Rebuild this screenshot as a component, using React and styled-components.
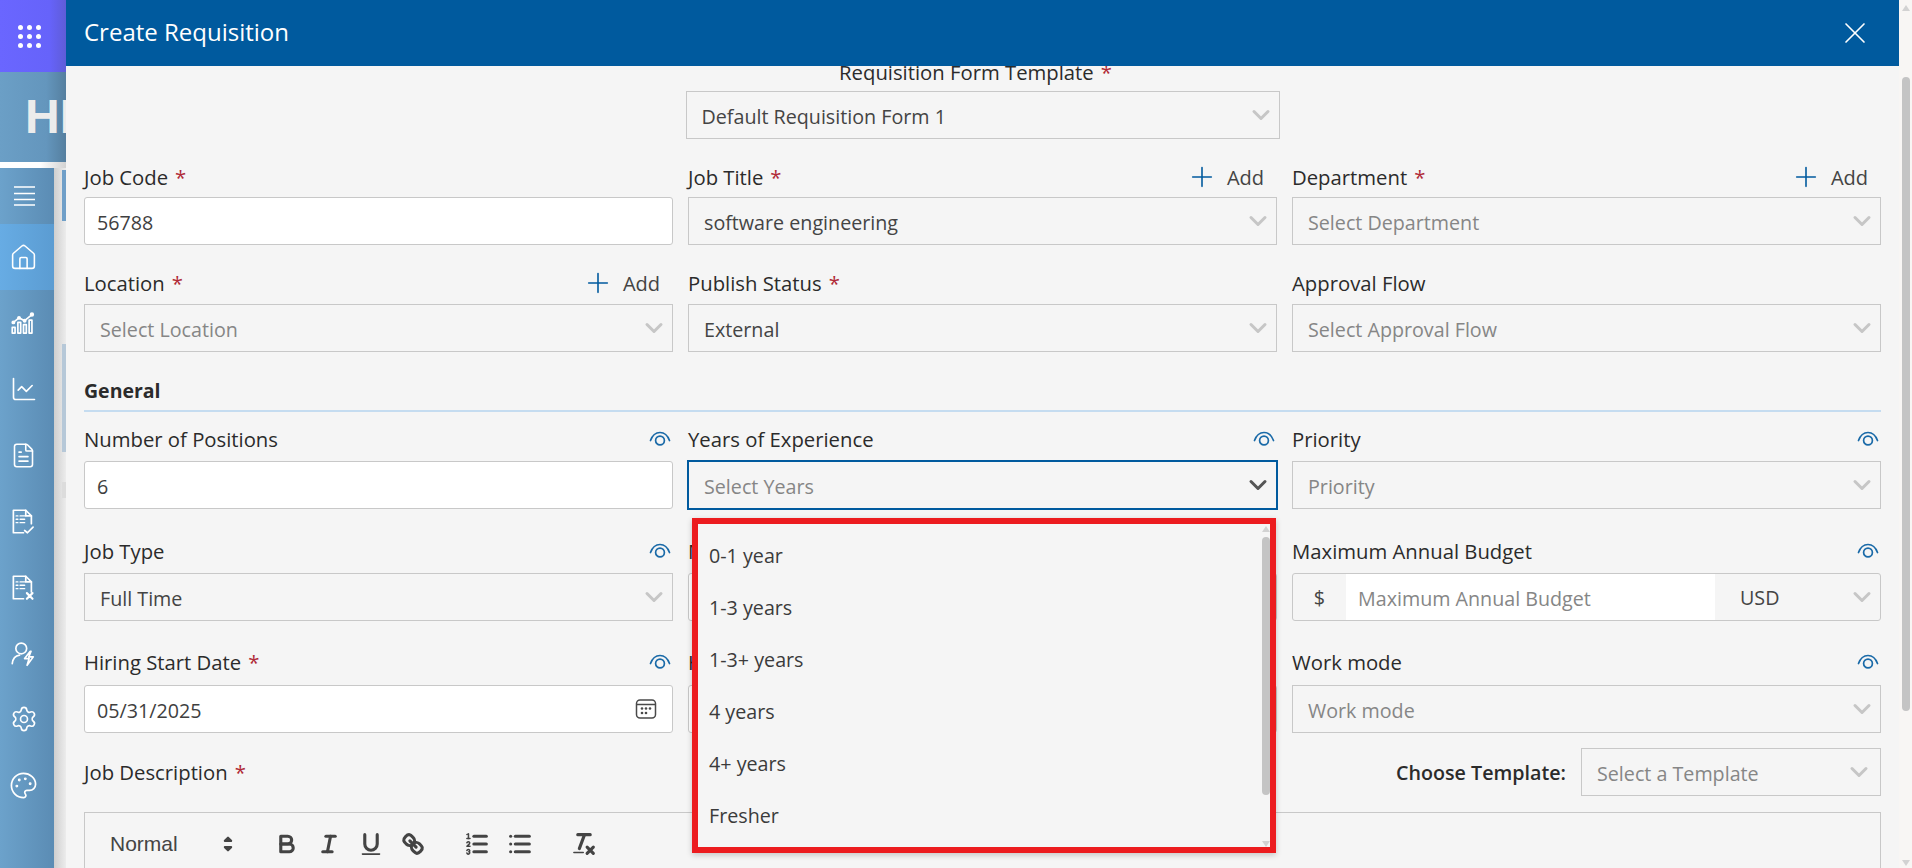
import React from "react";
import styled, { createGlobalStyle } from "styled-components";
import { House, ChartLine, FileText, Settings, Palette, X, Plus, ChevronDown } from "lucide-react";

const Global = createGlobalStyle`
  html, body { margin: 0; padding: 0; overflow: hidden; background: #f5f5f5; }
  * { box-sizing: border-box; }
  body { font-family: "Open Sans", "Noto Sans", sans-serif; }
`;

const Page = styled.div`
  width: 1912px; height: 868px; display: flex; overflow: hidden;
`;
const Rail = styled.div`
  width: 66px; flex: none; display: flex; flex-direction: column; overflow: hidden;
`;
const Launcher = styled.div`
  height: 72px; flex: none; display: flex; align-items: center; justify-content: center; padding-right: 7px;
  background: linear-gradient(90deg, #6a66ff 0%, #6663fa 75%, #5f5cd8 100%);
`;
const DotGrid = styled.div`
  display: grid; grid-template-columns: repeat(3, 5px); gap: 4px;
  span { width: 5px; height: 5px; border-radius: 50%; background: #fff; }
`;
const Brand = styled.div`
  height: 90px; flex: none; padding: 20px 0 0 25px; overflow: hidden; white-space: nowrap;
  background: linear-gradient(90deg, #6b9fc6 0%, #6496bd 70%, #557f9f 100%);
  font-family: "Liberation Sans", sans-serif; font-weight: 700; font-size: 48px; line-height: 50px; color: #ececec;
`;
const RailRule = styled.div`
  height: 6px; flex: none; background: linear-gradient(90deg, #fff 0%, #fff 60%, #d2d2d2 100%);
`;
const RailBody = styled.div`
  flex: 1; display: flex; min-height: 0;
`;
const Sidebar = styled.nav`
  width: 54px; flex: none; display: flex; flex-direction: column;
  background: linear-gradient(90deg, #6ca2cb 0%, #5b8cb4 100%);
`;
const NavItem = styled.div`
  height: ${p => p.$h || 66}px; flex: none; display: flex; align-items: center; justify-content: center;
  color: #fff; padding-right: 7px;
  background: ${p => p.$active ? "linear-gradient(90deg, #67ace4 0%, #5b9cd2 100%)" : "transparent"};
`;
const Gutter = styled.div`
  flex: 1; display: flex; flex-direction: column; align-items: flex-end; padding-top: 2px;
  background: linear-gradient(90deg, #cfcfcf 0%, #ececec 100%);
`;
const GutterTab = styled.div`
  width: 4px; flex: none; height: ${p => p.$h}px; margin-bottom: ${p => p.$mb || 0}px; background: ${p => p.$c};
`;
const Panel = styled.main`
  flex: 1; min-width: 0; display: flex; background: #f5f5f5;
`;
const Column = styled.div`
  flex: 1; min-width: 0; display: flex; flex-direction: column;
`;
const Header = styled.header`
  height: 66px; flex: none; background: #005a9e; color: #fff; display: flex; align-items: center; justify-content: space-between;
  padding: 0 26px 0 18px; position: relative; z-index: 2;
`;
const Title = styled.h1`
  margin: 0; font-size: 24px; font-weight: 400; line-height: 28px; padding-bottom: 3px;
`;
const Form = styled.form`
  flex: 1; min-height: 0; overflow: hidden; padding: 0 18px; position: relative;
`;
const TemplateBlock = styled.div`
  width: 594px; margin: -6px auto 0 auto;
`;
const TemplateLabel = styled.div`
  height: 24px; line-height: 24px; margin-bottom: 7px; padding-right: 14px; text-align: center; font-size: 20.3px; font-weight: 500; color: #2b2b2b; white-space: nowrap;
`;
const Row = styled.div`
  display: grid; grid-template-columns: repeat(3, 589px); column-gap: 15px; margin-top: ${p => p.$mt}px;
`;
const Field = styled.div`
  min-width: 0;
`;
const LabelRow = styled.div`
  height: 24px; display: flex; align-items: center; justify-content: space-between; margin-bottom: ${p => p.$gap}px;
`;
const Label = styled.label`
  font-size: 20.3px; font-weight: 500; line-height: 24px; color: #2b2b2b; white-space: nowrap;
`;
const Star = styled.span`
  color: #b02a37; margin-left: 7px;
`;
const Box = styled.div`
  height: 48px; display: flex; align-items: center; border: 1px solid #c8c8c8; background: ${p => p.$white ? "#fff" : "transparent"};
  border-radius: ${p => p.$white ? 3 : 0}px; padding: 3px 12px 0; font-size: 19.7px; color: #3f3f3f; white-space: nowrap;
  svg { margin-top: -3px; }
`;
const SelectBox = styled(Box)`
  justify-content: space-between; padding: 3px 4px 0 15px;
  color: ${p => p.$placeholder ? "#868686" : "#444"};
  ${p => p.$focus && `border-color: #005a9e; box-shadow: 0 0 0 1px #005a9e;`}
`;
const Chevron = styled(ChevronDown)`
  color: ${p => p.$dark ? "#555" : "#c6c6c6"}; flex: none; width: 28px; height: 28px;
`;
const AddLink = styled.span`
  display: flex; align-items: center; gap: 9px; padding-right: 13px; font-size: 20px; color: #444;
  svg { color: #005a9e; flex: none; }
`;
const SectionTitle = styled.div`
  margin-top: 26px; height: 34px; padding-top: 1px; line-height: 24px; border-bottom: 2px solid #c5dcf0;
  font-size: 19.5px; font-weight: 700; color: #2b2b2b;
`;
const EyeIcon = styled.svg`
  width: 22px; height: 18px; margin-right: 2px; fill: none; stroke: #1a6aa8; stroke-width: 1.7; flex: none;
`;
const Eye = () => (
  <EyeIcon viewBox="0 0 22 18">
    <path d="M1.5 10.5 C3.5 5 7 2.5 11 2.5 S18.5 5 20.5 10.5" strokeLinecap="round" />
    <circle cx="11" cy="10.5" r="4.4" />
  </EyeIcon>
);
const BudgetBox = styled.div`
  height: 48px; display: flex; border: 1px solid #c8c8c8; border-radius: 3px; font-size: 19.7px;
`;
const Prefix = styled.div`
  width: 53px; flex: none; display: flex; align-items: center; justify-content: center; color: #444;
`;
const BudgetInput = styled.div`
  flex: 1; background: #fff; color: #868686; display: flex; align-items: center; padding: 3px 0 0 12px;
`;
const Currency = styled.div`
  width: 165px; flex: none; display: flex; align-items: center; justify-content: space-between; padding: 0 4px 0 25px; color: #444;
`;
const DateBox = styled(Box)`
  justify-content: space-between; padding: 3px 14px 0 12px;
`;
const DescRow = styled.div`
  margin-top: 15px; display: flex; align-items: center; justify-content: space-between;
`;
const TemplateChooser = styled.div`
  display: flex; align-items: center; gap: 15px;
`;
const ChooserLabel = styled.span`
  font-size: 19.7px; font-weight: 600; color: #2b2b2b;
`;
const ChooserBox = styled(SelectBox)`
  width: 300px; padding-right: 7px;
`;
const Editor = styled.div`
  margin-top: 16px; height: 120px; border: 1px solid #c8c8c8; padding: 17px 0 0 25px; display: flex; align-items: flex-start;
`;
const Toolbar = styled.div`
  display: flex; align-items: center; height: 28px;
`;
const Picker = styled.div`
  width: 132px; flex: none; display: flex; align-items: center; justify-content: space-between;
  font-family: "Liberation Sans", Arial, sans-serif; font-size: 21px; color: #444;
  span { margin-top: -1px; }
`;
const Tool = styled.svg`
  width: 28px; height: 28px; flex: none; margin-left: ${p => p.$ml || 14}px; fill: none; stroke: #444; stroke-width: 2; stroke-linecap: round; stroke-linejoin: round;
  .f { fill: #444; stroke: none; }
  .t { stroke-width: 1; }
`;
const PickerIcon = styled(Tool)`
  margin-left: 0;
  polygon { fill: #444; stroke: #444; stroke-width: 1.4; }
`;
const Dropdown = styled.div`
  position: absolute; z-index: 3; left: 626px; top: 452px; width: 584px; height: 335px;
  border-width: 6px; border-style: solid; border-color: #ec1c1f; background: #f5f5f5;
  box-shadow: 0 2px 6px rgba(0,0,0,.2); display: flex;
`;
const Options = styled.ul`
  list-style: none; margin: 0; padding: 6px 0 0 11px; flex: 1; min-width: 0;
`;
const Option = styled.li`
  height: 52px; line-height: 52px; font-size: 19.7px; color: #3b3b3b;
`;
const MenuScroll = styled.div`
  width: 8px; flex: none; display: flex; flex-direction: column; align-items: center; padding-top: 2px;
`;
const UpArrow = styled.div`
  width: 0; height: 0; border-left: 4px solid transparent; border-right: 4px solid transparent; border-bottom: 6px solid #d2d2d2; flex: none;
`;
const DownArrow = styled(UpArrow)`
  border-bottom: 0; border-top: 6px solid #d2d2d2; margin-top: auto;
`;
const Thumb = styled.div`
  width: 8px; height: ${p => p.$h}px; margin-top: ${p => p.$mt}px; background: #c4c4c4; border-radius: 4px; flex: none;
`;
const PageScroll = styled.div`
  width: 13px; flex: none; background: #f8f6f4; display: flex; flex-direction: column; align-items: center; padding: 5px 0 2px 0;
`;

const Hamburger = () => (
  <svg width="24" height="24" viewBox="0 0 24 24" stroke="#fff" strokeWidth="1.4">
    <path d="M2 4h21M2 10.5h21M2 16.5h21M2 22h21" transform="translate(0 -1)" />
  </svg>
);
const Ico = p => <svg width="27" height="27" viewBox="0 0 24 24" fill="none" stroke="#fff" strokeWidth="1.5" strokeLinecap="round" strokeLinejoin="round" {...p} />;
const BarsLine = () => (
  <Ico>
    <path d="M2 20.5v-5h2.5v5zM7 20.5V11h2.5v9.5zM12 20.5v-7.5h2.5v7.5zM17 20.5V9h2.5v11.5z" />
    <path d="M3 11l5-4 5 2.5 6-5" />
    <circle cx="3" cy="11" r="1" fill="#fff" /><circle cx="8" cy="7" r="1" fill="#fff" /><circle cx="13" cy="9.5" r="1" fill="#fff" /><circle cx="19.5" cy="4" r="1.2" fill="#fff" />
  </Ico>
);
const Lines = () => <path d="M5.5 7h1.5M5.5 10h1.5M5.5 13h1.5M9 7h4M9 10h4M9 13h4" strokeWidth="1.3" />;
const FileCheck = () => (
  <Ico>
    <path d="M12 22H3V2h11l5 5v7" /><path d="M14 2v5h5" /><Lines /><path d="M13 20l2.5 2 5-5" />
  </Ico>
);
const FileCross = () => (
  <Ico>
    <path d="M12 22H3V2h11l5 5v9" /><path d="M14 2v5h5" /><Lines /><path d="M15 17l5 5M20 17l-5 5" strokeWidth="1.9" />
  </Ico>
);
const UserBolt = () => (
  <Ico>
    <circle cx="10" cy="7.5" r="4.8" /><path d="M2 21c.5-4.5 3-7 6.5-7.5" /><path d="M18 10l-5 6.5h4l-1.8 6 5.5-7.5h-4l2-5z" />
  </Ico>
);

const Calendar = () => (
  <svg width="24" height="24" viewBox="0 0 24 24" fill="none" stroke="#4a4a4a" strokeWidth="1.5">
    <rect x="2.5" y="3" width="19" height="18" rx="3.5" />
    <path d="M2.5 7.5h19" />
    <g fill="#4a4a4a" stroke="none">
      <circle cx="8" cy="11.5" r="1.3" /><circle cx="12" cy="11.5" r="1.3" /><circle cx="16" cy="11.5" r="1.3" />
      <circle cx="8" cy="16" r="1.3" /><circle cx="12" cy="16" r="1.3" />
    </g>
  </svg>
);

const Req = ({ children }) => <Label>{children}<Star>*</Star></Label>;
const Add = () => <AddLink><Plus size={32} strokeWidth={1.2} />Add</AddLink>;
const Sel = ({ children, placeholder, dark, focus }) => (
  <SelectBox $placeholder={placeholder} $focus={focus}>
    <span>{children}</span>
    <Chevron $dark={dark} strokeWidth={2.6} />
  </SelectBox>
);

const options = ["0-1 year", "1-3 years", "1-3+ years", "4 years", "4+ years", "Fresher"];

export default function App() {
  return (
    <Page>
      <Global />
      <Rail>
        <Launcher><DotGrid>{Array.from({ length: 9 }, (_, i) => <span key={i} />)}</DotGrid></Launcher>
        <Brand>HRMS</Brand>
        <RailRule />
        <RailBody>
          <Sidebar>
            <NavItem $h={56}><Hamburger /></NavItem>
            <NavItem $active><House size={29} strokeWidth={1.3} /></NavItem>
            <NavItem><BarsLine /></NavItem>
            <NavItem><ChartLine size={28} strokeWidth={1.4} /></NavItem>
            <NavItem><FileText size={27} strokeWidth={1.4} /></NavItem>
            <NavItem><FileCheck /></NavItem>
            <NavItem><FileCross /></NavItem>
            <NavItem><UserBolt /></NavItem>
            <NavItem><Settings size={28} strokeWidth={1.4} /></NavItem>
            <NavItem><Palette size={29} strokeWidth={1.4} /></NavItem>
          </Sidebar>
          <Gutter>
            <GutterTab $h={51} $c="#6f9fc8" $mb={123} />
            <GutterTab $h={108} $c="#b6c8d8" $mb={30} />
            <GutterTab $h={16} $c="#dcdcdc" />
          </Gutter>
        </RailBody>
      </Rail>
      <Panel>
        <Column>
          <Header>
            <Title>Create Requisition</Title>
            <X size={36} strokeWidth={1.1} />
          </Header>
          <Form as="div">
            <TemplateBlock>
              <TemplateLabel>Requisition Form Template<Star>*</Star></TemplateLabel>
              <Sel>Default Requisition Form 1</Sel>
            </TemplateBlock>
            <Row $mt={26}>
              <Field><LabelRow $gap={8}><Req>Job Code</Req></LabelRow><Box $white>56788</Box></Field>
              <Field><LabelRow $gap={8}><Req>Job Title</Req><Add /></LabelRow><Sel>software engineering</Sel></Field>
              <Field><LabelRow $gap={8}><Req>Department</Req><Add /></LabelRow><Sel placeholder>Select Department</Sel></Field>
            </Row>
            <Row $mt={26}>
              <Field><LabelRow $gap={9}><Req>Location</Req><Add /></LabelRow><Sel placeholder>Select Location</Sel></Field>
              <Field><LabelRow $gap={9}><Req>Publish Status</Req></LabelRow><Sel>External</Sel></Field>
              <Field><LabelRow $gap={9}><Label>Approval Flow</Label></LabelRow><Sel placeholder>Select Approval Flow</Sel></Field>
            </Row>
            <SectionTitle>General</SectionTitle>
            <Row $mt={15}>
              <Field><LabelRow $gap={10}><Label>Number of Positions</Label><Eye /></LabelRow><Box $white>6</Box></Field>
              <Field><LabelRow $gap={10}><Label>Years of Experience</Label><Eye /></LabelRow><Sel placeholder dark focus>Select Years</Sel></Field>
              <Field><LabelRow $gap={10}><Label>Priority</Label><Eye /></LabelRow><Sel placeholder>Priority</Sel></Field>
            </Row>
            <Row $mt={30}>
              <Field><LabelRow $gap={10}><Label>Job Type</Label><Eye /></LabelRow><Sel>Full Time</Sel></Field>
              <Field><LabelRow $gap={10}><Label>Minimum Annual Budget</Label><Eye /></LabelRow><Box $white>Minimum Annual Budget</Box></Field>
              <Field>
                <LabelRow $gap={10}><Label>Maximum Annual Budget</Label><Eye /></LabelRow>
                <BudgetBox>
                  <Prefix>$</Prefix>
                  <BudgetInput>Maximum Annual Budget</BudgetInput>
                  <Currency><span>USD</span><Chevron strokeWidth={2.6} /></Currency>
                </BudgetBox>
              </Field>
            </Row>
            <Row $mt={29}>
              <Field><LabelRow $gap={11}><Req>Hiring Start Date</Req><Eye /></LabelRow><DateBox $white>05/31/2025<Calendar /></DateBox></Field>
              <Field><LabelRow $gap={11}><Label>Hiring End Date</Label><Eye /></LabelRow><Box $white>05/31/2025</Box></Field>
              <Field><LabelRow $gap={11}><Label>Work mode</Label><Eye /></LabelRow><Sel placeholder>Work mode</Sel></Field>
            </Row>
            <DescRow>
              <Req>Job Description</Req>
              <TemplateChooser>
                <ChooserLabel>Choose Template:</ChooserLabel>
                <ChooserBox $placeholder><span>Select a Template</span><Chevron strokeWidth={2.6} /></ChooserBox>
              </TemplateChooser>
            </DescRow>
            <Editor>
              <Toolbar>
                <Picker>
                  <span>Normal</span>
                  <PickerIcon viewBox="0 0 18 18"><polygon points="7 11 9 13 11 11 7 11" /><polygon points="7 7 9 5 11 7 7 7" /></PickerIcon>
                </Picker>
                <Tool viewBox="0 0 18 18" $ml={31}>
                  <path d="M5,4H9.5A2.5,2.5,0,0,1,12,6.5v0A2.5,2.5,0,0,1,9.5,9H5A0,0,0,0,1,5,9V4A0,0,0,0,1,5,4Z" />
                  <path d="M5,9h5.5A2.5,2.5,0,0,1,13,11.5v0A2.5,2.5,0,0,1,10.5,14H5a0,0,0,0,1,0,0V9A0,0,0,0,1,5,9Z" />
                </Tool>
                <Tool viewBox="0 0 18 18">
                  <line x1="7" x2="13" y1="4" y2="4" /><line x1="5" x2="11" y1="14" y2="14" /><line x1="8" x2="10" y1="14" y2="4" />
                </Tool>
                <Tool viewBox="0 0 18 18">
                  <path d="M5,3V9a4.012,4.012,0,0,0,4,4H9a4.012,4.012,0,0,0,4-4V3" />
                  <rect className="f" height="1" rx=".5" ry=".5" width="12" x="3" y="15" />
                </Tool>
                <Tool viewBox="0 0 18 18">
                  <line x1="7" x2="11" y1="7" y2="11" />
                  <path d="M8.9,4.577a3.476,3.476,0,0,1,.36,4.679A3.476,3.476,0,0,1,4.577,8.9C3.185,7.5,2.035,6.4,4.217,4.217S7.5,3.185,8.9,4.577Z" />
                  <path d="M13.423,9.1a3.476,3.476,0,0,0-4.679-.36,3.476,3.476,0,0,0,.36,4.679c1.392,1.392,2.5,2.542,4.679.36S14.815,10.5,13.423,9.1Z" />
                </Tool>
                <Tool viewBox="0 0 18 18" $ml={36}>
                  <line x1="7" x2="15" y1="4" y2="4" /><line x1="7" x2="15" y1="9" y2="9" /><line x1="7" x2="15" y1="14" y2="14" />
                  <line className="t" x1="2.5" x2="4.5" y1="5.5" y2="5.5" />
                  <path className="f" d="M3.5,6A0.5,0.5,0,0,1,3,5.5V3.085l-0.276.138A0.5,0.5,0,0,1,2.053,3c-0.124-.247-0.023-0.324.224-0.447l1-.5A0.5,0.5,0,0,1,4,2.5v3A0.5,0.5,0,0,1,3.5,6Z" />
                  <path className="t" d="M4.5,10.5h-2c0-.234,1.85-1.076,1.85-2.234A0.959,0.959,0,0,0,2.5,8.156" />
                  <path className="t" d="M2.5,14.846a0.959,0.959,0,0,0,1.85-.109A0.7,0.7,0,0,0,3.75,14a0.688,0.688,0,0,0,.6-0.736,0.959,0.959,0,0,0-1.85-.109" />
                </Tool>
                <Tool viewBox="0 0 18 18" $ml={15}>
                  <line x1="6" x2="15" y1="4" y2="4" /><line x1="6" x2="15" y1="9" y2="9" /><line x1="6" x2="15" y1="14" y2="14" />
                  <line x1="3" x2="3" y1="4" y2="4" /><line x1="3" x2="3" y1="9" y2="9" /><line x1="3" x2="3" y1="14" y2="14" />
                </Tool>
                <Tool viewBox="0 0 18 18" $ml={36}>
                  <line x1="5" x2="13" y1="3" y2="3" /><line x1="6" x2="9.35" y1="12" y2="3" />
                  <line x1="11" x2="15" y1="11" y2="15" /><line x1="15" x2="11" y1="11" y2="15" />
                  <rect className="f" height="1" rx=".5" ry=".5" width="7" x="2" y="14" />
                </Tool>
              </Toolbar>
            </Editor>
            <Dropdown>
              <Options>{options.map(o => <Option key={o}>{o}</Option>)}</Options>
              <MenuScroll>
                <UpArrow />
                <Thumb $h={258} $mt={5} />
                <DownArrow />
              </MenuScroll>
            </Dropdown>
          </Form>
        </Column>
        <PageScroll>
          <UpArrow />
          <Thumb $h={634} $mt={66} />
          <DownArrow />
        </PageScroll>
      </Panel>
    </Page>
  );
}
